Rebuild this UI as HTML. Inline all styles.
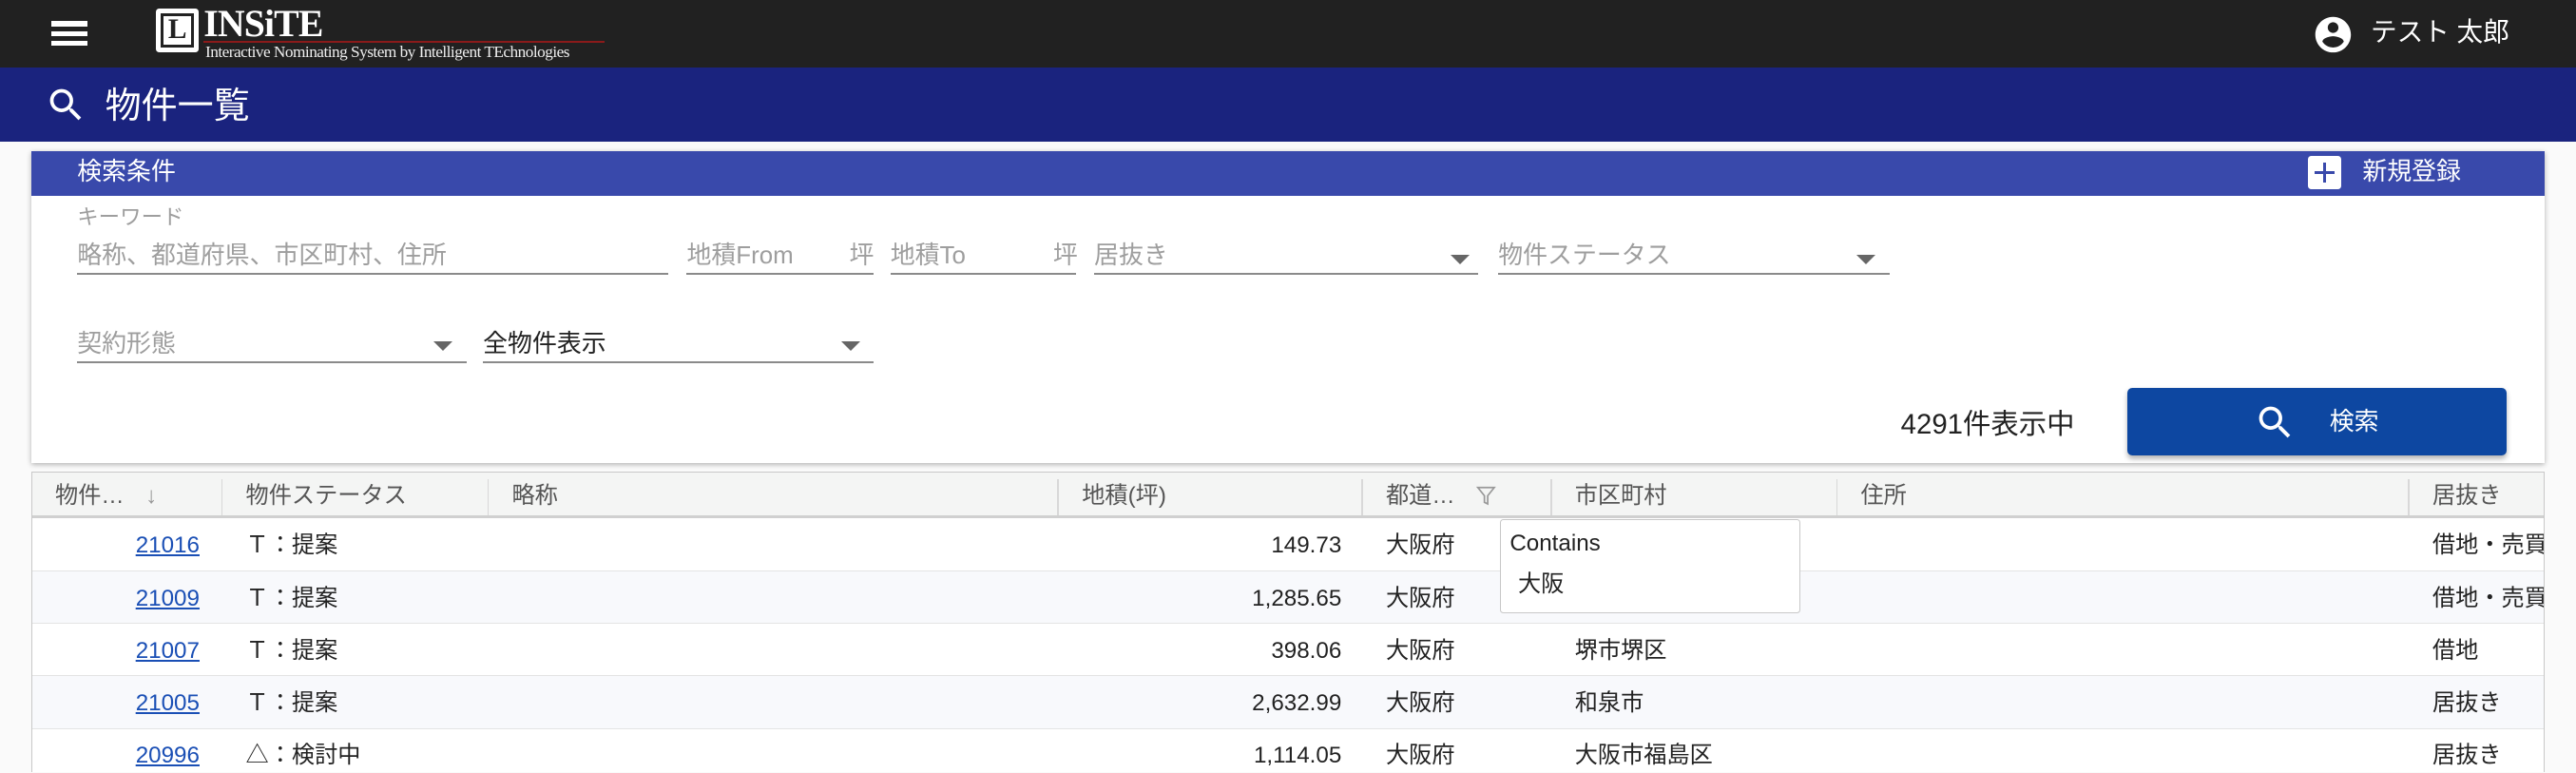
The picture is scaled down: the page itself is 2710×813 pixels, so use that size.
<!DOCTYPE html>
<html><head><meta charset="utf-8"><style>
*{box-sizing:border-box;margin:0;padding:0}
html,body{width:2710px;height:813px;overflow:hidden;background:#fafafa}
#w{zoom:1.72832;width:1568px;height:470px;position:relative;font-family:"Liberation Sans","Noto Sans CJK JP",sans-serif;overflow:hidden;line-height:1.2}
.a{position:absolute;white-space:nowrap}
.top{left:0;top:0;width:1568px;height:41px;background:#212121}
.ttl{left:0;top:41px;width:1568px;height:45px;background:#1a237e}
.card{left:19px;top:92px;width:1530px;height:190px;background:#fff;box-shadow:0 1px 3px rgba(0,0,0,.3)}
.ch{left:19px;top:92px;width:1530px;height:27px;background:#3949ab}
.ul{position:absolute;height:1px;background:#8a8a8a}
.ph{color:#9e9e9e;font-size:15px}
.arr{position:absolute;width:0;height:0;border-left:6px solid transparent;border-right:6px solid transparent;border-top:6px solid #666}
.grid{left:19px;top:287px;width:1530px;height:190px;border:1px solid #c8c8c8;background:#fff;overflow:hidden}
.hd{position:absolute;left:0;top:0;width:1530px;height:28px;background:#f4f5f4;border-bottom:2px solid #d0d0d0}
.sep{position:absolute;top:4px;width:1px;height:22px;background:#d8d8d8}
.h{position:absolute;top:6px;font-size:14px;color:#555}
.r{position:absolute;left:0;width:1530px;height:32px;border-bottom:1px solid #e4e4e4;font-size:14px;color:#222}
.r span{position:absolute;top:8px;white-space:nowrap}
.lk{color:#1a4fb5;text-decoration:underline}
</style></head><body><div id="w">
<div class="a top"></div>
<div class="a" style="left:31px;top:13px;width:22px;height:3px;background:#fff"></div>
<div class="a" style="left:31px;top:19px;width:22px;height:3px;background:#fff"></div>
<div class="a" style="left:31px;top:25px;width:22px;height:3px;background:#fff"></div>
<div class="a" style="left:95px;top:5px;width:26px;height:27px;background:#fff;border-radius:2px"></div>
<div class="a" style="left:98px;top:8px;width:20px;height:21px;border:2px solid #222;color:#222;font:bold 17px 'Liberation Serif',serif;text-align:center;line-height:17px">L</div>
<div class="a" style="left:124px;top:1px;color:#fff;font:bold 23px 'Liberation Serif',serif;letter-spacing:-0.5px">INSiTE</div>
<div class="a" style="left:124px;top:25px;width:244px;height:1px;background:#8b1a1a"></div>
<div class="a" style="left:125px;top:26px;color:#eee;font:10px 'Liberation Serif',serif;letter-spacing:-0.3px">Interactive Nominating System by Intelligent TEchnologies</div>
<svg class="a" style="left:1407px;top:8px" width="26" height="26" viewBox="0 0 24 24"><path fill="#fff" d="M12 2C6.48 2 2 6.48 2 12s4.48 10 10 10 10-4.48 10-10S17.52 2 12 2zm0 3c1.66 0 3 1.34 3 3s-1.34 3-3 3-3-1.34-3-3 1.34-3 3-3zm0 14.2c-2.5 0-4.71-1.28-6-3.22.03-1.99 4-3.08 6-3.08 1.99 0 5.97 1.09 6 3.08-1.29 1.94-3.5 3.22-6 3.22z"/></svg>
<div class="a" style="left:1443px;top:10px;color:#fff;font-size:16px">テスト 太郎</div>
<div class="a ttl"></div>
<svg class="a" style="left:27px;top:51px" width="26" height="26" viewBox="0 0 24 24"><path fill="#fff" d="M15.5 14h-.79l-.28-.27A6.47 6.47 0 0016 9.5 6.5 6.5 0 109.5 16c1.61 0 3.09-.59 4.23-1.57l.27.28v.79l5 4.99L20.49 19l-4.99-5zm-6 0C7.01 14 5 11.99 5 9.5S7.01 5 9.5 5 14 7.01 14 9.5 11.99 14 9.5 14z"/></svg>
<div class="a" style="left:64px;top:52px;color:#fff;font-size:22px">物件一覧</div>
<div class="a card"></div>
<div class="a ch"></div>
<div class="a" style="left:47px;top:96px;color:#fff;font-size:15px">検索条件</div>
<div class="a" style="left:1405px;top:95px;width:20px;height:20px;background:#fff;border-radius:2px"></div>
<div class="a" style="left:1409px;top:104px;width:12px;height:2px;background:#3949ab"></div>
<div class="a" style="left:1414px;top:99px;width:2px;height:12px;background:#3949ab"></div>
<div class="a" style="left:1438px;top:96px;color:#fff;font-size:15px">新規登録</div>
<div class="a" style="left:47px;top:125px;color:#9e9e9e;font-size:13px">キーワード</div>
<div class="a ph" style="left:47px;top:147px">略称、都道府県、市区町村、住所</div><div class="ul" style="left:47px;top:166px;width:360px"></div>
<div class="a ph" style="left:418px;top:147px">地積From</div><div class="a ph" style="left:517px;top:147px">坪</div><div class="ul" style="left:418px;top:166px;width:114px"></div>
<div class="a ph" style="left:542px;top:147px">地積To</div><div class="a ph" style="left:641px;top:147px">坪</div><div class="ul" style="left:542px;top:166px;width:113px"></div>
<div class="a ph" style="left:666px;top:147px">居抜き</div><div class="arr" style="left:883px;top:155px"></div><div class="ul" style="left:666px;top:166px;width:234px"></div>
<div class="a ph" style="left:912px;top:147px">物件ステータス</div><div class="arr" style="left:1130px;top:155px"></div><div class="ul" style="left:912px;top:166px;width:238px"></div>
<div class="a ph" style="left:47px;top:201px">契約形態</div><div class="arr" style="left:264px;top:208px"></div><div class="ul" style="left:47px;top:220px;width:237px"></div>
<div class="a" style="left:294px;top:201px;font-size:15px;color:#222">全物件表示</div><div class="arr" style="left:512px;top:208px"></div><div class="ul" style="left:294px;top:220px;width:238px"></div>
<div class="a" style="left:1157px;top:248px;font-size:17px;color:#222">4291件表示中</div>
<div class="a" style="left:1295px;top:236px;width:231px;height:41px;background:#0d47a1;border-radius:3px;box-shadow:0 2px 3px rgba(0,0,0,.3)"></div>
<svg class="a" style="left:1372px;top:244px" width="26" height="26" viewBox="0 0 24 24"><path fill="#fff" d="M15.5 14h-.79l-.28-.27A6.47 6.47 0 0016 9.5 6.5 6.5 0 109.5 16c1.61 0 3.09-.59 4.23-1.57l.27.28v.79l5 4.99L20.49 19l-4.99-5zm-6 0C7.01 14 5 11.99 5 9.5S7.01 5 9.5 5 14 7.01 14 9.5 11.99 14 9.5 14z"/></svg>
<div class="a" style="left:1418px;top:248px;color:#fff;font-size:15px">検索</div>
<div class="a grid">
<div class="hd">
<span class="h" style="left:14px">物件…</span><span class="h" style="left:69px;color:#999">↓</span>
<div class="sep" style="left:115px"></div><span class="h" style="left:130px">物件ステータス</span>
<div class="sep" style="left:277px"></div><span class="h" style="left:292px">略称</span>
<div class="sep" style="left:624px"></div><span class="h" style="left:639px">地積(坪)</span>
<div class="sep" style="left:809px"></div><span class="h" style="left:824px">都道…</span>
<svg style="position:absolute;left:879px;top:8px" width="12" height="12" viewBox="0 0 12 12"><path d="M1 1h10L7 6v5L5 10V6z" fill="none" stroke="#999"/></svg>
<div class="sep" style="left:924px"></div><span class="h" style="left:939px">市区町村</span>
<div class="sep" style="left:1098px"></div><span class="h" style="left:1113px">住所</span>
<div class="sep" style="left:1446px"></div><span class="h" style="left:1461px">居抜き</span>
</div>
<div class="r" style="top:28px;background:#fff"><span class="lk" style="left:63px">21016</span><span style="left:130px">Ｔ：提案</span><span style="right:733px">149.73</span><span style="left:824px">大阪府</span><span style="left:1461px">借地・売買</span></div>
<div class="r" style="top:60px;background:#f8f9fc"><span class="lk" style="left:63px">21009</span><span style="left:130px">Ｔ：提案</span><span style="right:733px">1,285.65</span><span style="left:824px">大阪府</span><span style="left:1461px">借地・売買</span></div>
<div class="r" style="top:92px;background:#fff"><span class="lk" style="left:63px">21007</span><span style="left:130px">Ｔ：提案</span><span style="right:733px">398.06</span><span style="left:824px">大阪府</span><span style="left:939px">堺市堺区</span><span style="left:1461px">借地</span></div>
<div class="r" style="top:124px;background:#f8f9fc"><span class="lk" style="left:63px">21005</span><span style="left:130px">Ｔ：提案</span><span style="right:733px">2,632.99</span><span style="left:824px">大阪府</span><span style="left:939px">和泉市</span><span style="left:1461px">居抜き</span></div>
<div class="r" style="top:156px;background:#fff"><span class="lk" style="left:63px">20996</span><span style="left:130px">△：検討中</span><span style="right:733px">1,114.05</span><span style="left:824px">大阪府</span><span style="left:939px">大阪市福島区</span><span style="left:1461px">居抜き</span></div>
</div>
<div class="a" style="left:913px;top:316px;width:183px;height:57px;background:#fff;border:1px solid #c8c8c8;border-radius:2px"></div>
<div class="a" style="left:919px;top:322px;font-size:14px;color:#222">Contains</div>
<div class="a" style="left:924px;top:347px;font-size:14px;color:#222">大阪</div>
</div></body></html>
